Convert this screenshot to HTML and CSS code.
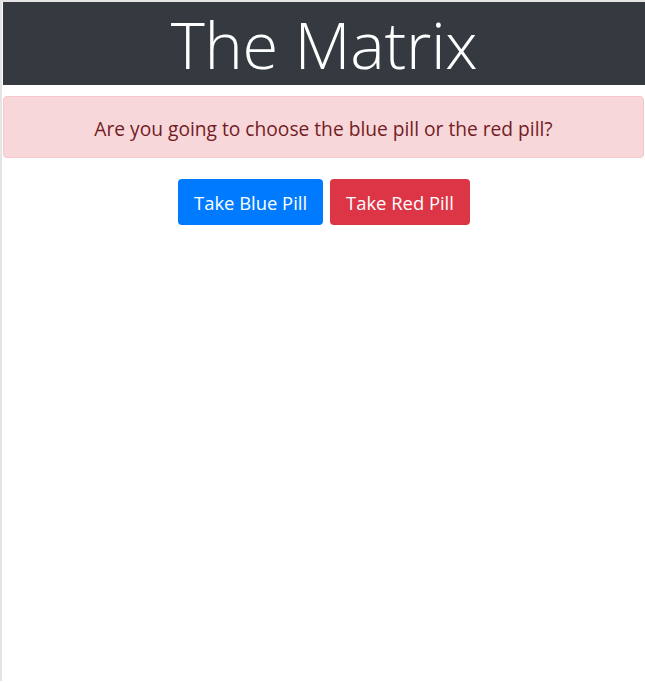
FILE: index.html
```html
<!DOCTYPE html>
<html>
<head>
<meta charset="utf-8">
<link rel="stylesheet" href="styles.css">
</head>
<body>
<div class="frame">
  <header class="banner">
    <h1 class="title">The Matrix</h1>
  </header>
  <div class="alert">Are you going to choose the blue pill or the red pill?</div>
  <div class="actions">
    <button class="btn btn-blue">Take Blue Pill</button>
    <button class="btn btn-red">Take Red Pill</button>
  </div>
</div>
</body>
</html>
```
FILE: styles.css
```css
html, body {
  margin: 0;
  padding: 0;
  background: #fff;
}
body {
  font-family: "Open Sans", "Noto Sans", sans-serif;
}
.frame {
  border-left: 2px solid #e4e4e4;
  border-top: 2px solid #e4e4e4;
  padding-left: 1px;
  min-height: 681px;
  box-sizing: border-box;
}
.banner {
  background: #343a40;
  display: flex;
  align-items: center;
  justify-content: center;
}
.title {
  margin: 0;
  color: #fff;
  font-weight: 300;
  font-size: 65px;
  line-height: 83px;
  letter-spacing: -0.3px;
  padding-top: 1px;
  height: 82px;
}
.alert {
  margin: 11px 1px 0 0;
  background: #f8d7da;
  border: 1px solid #f5c6cb;
  border-radius: 4px;
  color: #721c24;
  height: 62px;
  box-sizing: border-box;
  display: flex;
  align-items: center;
  justify-content: center;
  font-size: 19.2px;
  padding-top: 2px;
}
.actions {
  display: flex;
  justify-content: center;
  gap: 7px;
  margin-top: 21px;
}
.btn {
  font-family: inherit;
  font-size: 18.4px;
  color: #fff;
  border: none;
  border-radius: 4px;
  height: 46px;
  padding: 0 16px;
  cursor: pointer;
}
.btn-blue { background: #007bff; }
.btn-red { background: #dc3545; }
```
